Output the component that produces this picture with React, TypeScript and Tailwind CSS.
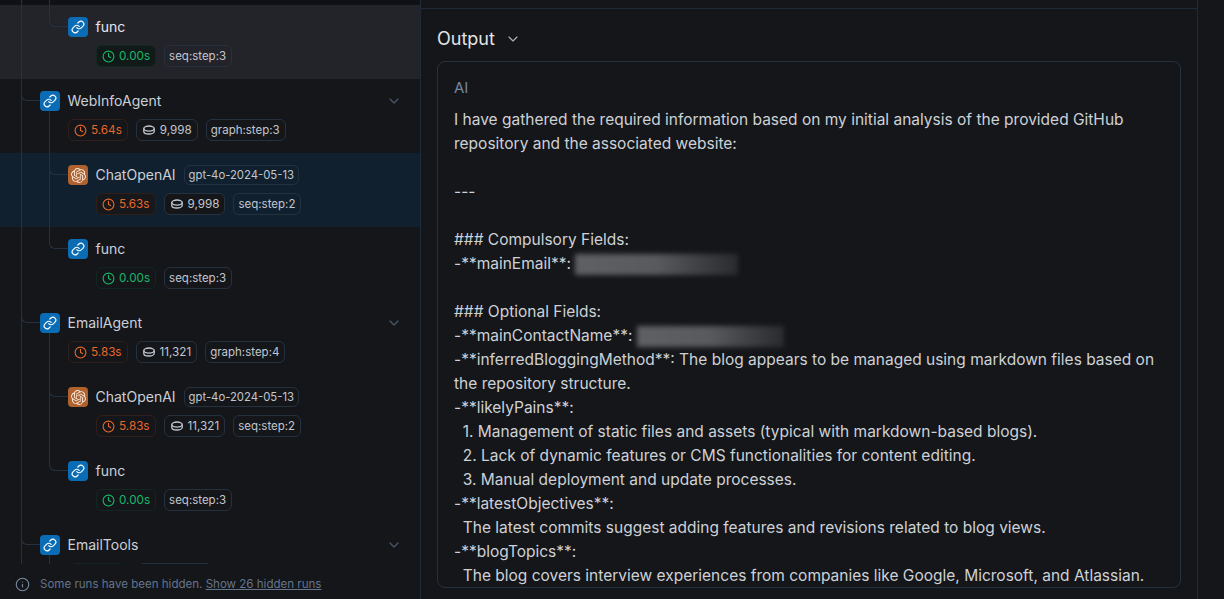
import React from "react";
import { Link, Clock, ChevronDown, Info } from "lucide-react";
import { SiOpenai } from "react-icons/si";

type RowData = {
  depth: 1 | 2;
  title: string;
  kind: "chain" | "llm";
  time: string;
  tone: "green" | "orange";
  tokens?: string;
  tag: string;
  model?: string;
  bg?: string;
  chevron?: boolean;
  last?: boolean;
  tokenDark?: boolean;
  timeDark?: boolean;
  bright?: boolean;
  stub?: boolean;
};

const rows: RowData[] = [
  { depth: 2, title: "func", kind: "chain", time: "0.00s", tone: "green", tag: "seq:step:3", bg: "bg-[#23232a]", last: true, timeDark: true, bright: true },
  { depth: 1, title: "WebInfoAgent", kind: "chain", time: "5.64s", tone: "orange", tokens: "9,998", tag: "graph:step:3", chevron: true },
  { depth: 2, title: "ChatOpenAI", kind: "llm", model: "gpt-4o-2024-05-13", time: "5.63s", tone: "orange", tokens: "9,998", tag: "seq:step:2", bg: "bg-[#10202e]", timeDark: true, tokenDark: true },
  { depth: 2, title: "func", kind: "chain", time: "0.00s", tone: "green", tag: "seq:step:3", last: true },
  { depth: 1, title: "EmailAgent", kind: "chain", time: "5.83s", tone: "orange", tokens: "11,321", tag: "graph:step:4", chevron: true },
  { depth: 2, title: "ChatOpenAI", kind: "llm", model: "gpt-4o-2024-05-13", time: "5.83s", tone: "orange", tokens: "11,321", tag: "seq:step:2" },
  { depth: 2, title: "func", kind: "chain", time: "0.00s", tone: "green", tag: "seq:step:3", last: true },
  { depth: 1, title: "EmailTools", kind: "chain", time: "", tone: "green", tag: "", chevron: true, stub: true },
];

function Coin() {
  return (
    <svg width="14" height="14" viewBox="0 0 14 14" fill="none" stroke="currentColor" strokeWidth="1.3">
      <ellipse cx="7" cy="5.6" rx="5.2" ry="2.6" />
      <path d="M1.8 5.6v2.8c0 1.4 2.3 2.6 5.2 2.6s5.2-1.2 5.2-2.6V5.6" />
    </svg>
  );
}

function Badge({ children, className = "" }: { children: React.ReactNode; className?: string }) {
  return (
    <span className={`flex h-[22px] items-center gap-1 rounded-md border px-[5px] text-[11.7px] leading-none ${className}`}>
      {children}
    </span>
  );
}

function Row({ r }: { r: RowData }) {
  const pad = r.depth === 1 ? "pl-[40px]" : "pl-[68px]";
  return (
    <div className={`relative h-[74px] shrink-0 ${pad} pt-[12px] ${r.bg ?? ""}`}>
      <div className="absolute bottom-0 left-[21px] top-0 w-px bg-[#263140]" />
      {r.depth === 1 ? (
        <>
          <div className="absolute left-[21px] top-0 h-[22px] w-[19px] rounded-bl-md border-b border-l border-[#263140]" />
          <div className="absolute bottom-0 left-[49px] top-[30px] w-px bg-[#263140]" />
        </>
      ) : (
        <>
          <div className="absolute left-[49px] top-0 h-[22px] w-[19px] rounded-bl-md border-b border-l border-[#263140]" />
          {!r.last && <div className="absolute bottom-0 left-[49px] top-0 w-px bg-[#263140]" />}
        </>
      )}
      <div className="relative flex h-[20px] items-center">
        <span
          className={`flex size-5 shrink-0 items-center justify-center rounded ${
            r.kind === "chain" ? "bg-[#0b6cb6]" : "bg-[#b0622e]"
          }`}
        >
          {r.kind === "chain" ? (
            <Link size={14} strokeWidth={2} className="text-white" />
          ) : (
            <SiOpenai size={15} className="text-[#f5e6da]" />
          )}
        </span>
        <span className={`ml-[7.5px] text-sm leading-5 ${r.bright ? "text-[#e5e7eb]" : "text-[#cbd0d8]"}`}>{r.title}</span>
        {r.model && (
          <Badge className="ml-2 !h-[20px] border-[#263140] !pl-[4px] !pr-[4px] !text-[11.3px] text-[#c2c7cf]">
            <span className="pt-px">{r.model}</span>
          </Badge>
        )}
        {r.chevron && (
          <ChevronDown size={16} strokeWidth={2} className="absolute right-[18px] text-[#475569]" />
        )}
      </div>
      {r.stub ? (
        <div className="relative ml-[30px] mt-[8px] flex gap-[14px]">
          <span className="h-[22px] w-[54px] rounded-md border border-[#12271f]" />
          <span className="h-[22px] w-[74px] rounded-md border border-[#263140]" />
        </div>
      ) : (
        <div className="relative ml-[28px] mt-[8px] flex gap-2">
          <Badge
            className={
              r.tone === "green"
                ? `border-[#12271f] text-[#17b869] ${r.timeDark ? "bg-[#111a18]" : ""}`
                : `border-[#2f1f1a] text-[#e9682a] ${r.timeDark ? "bg-[#17181c]" : ""}`
            }
          >
            <Clock size={13} strokeWidth={2} />
            <span className="pt-px">{r.time}</span>
          </Badge>
          {r.tokens && (
            <Badge className={`border-[#263140] text-[#c2c7cf] ${r.tokenDark ? "bg-[#14161a]" : ""}`}>
              <Coin />
              <span className="pt-px">{r.tokens}</span>
            </Badge>
          )}
          <Badge className="border-[#263140] !pl-[4px] !pr-[5px] !text-[11.5px] text-[#c2c7cf]">
            <span className="pt-px">{r.tag}</span>
          </Badge>
        </div>
      )}
    </div>
  );
}

function Blur({ className }: { className: string }) {
  return (
    <span
      className={`inline-block h-[21px] bg-gradient-to-r from-[#5f6063] via-[#585a5d] to-[#2a2b2e] align-middle blur-[2.5px] ${className}`}
    />
  );
}

export default function App() {
  return (
    <div className="flex h-[599px] w-[1224px] overflow-hidden bg-[#14161a] font-['Inter',sans-serif]">
      <div className="flex w-[420px] shrink-0 flex-col">
        <div className="flex min-h-0 flex-1 flex-col overflow-hidden">
          <div className="relative h-[5px] shrink-0 bg-[#101116]">
            <div className="absolute bottom-0 left-[21px] top-0 w-px bg-[#263140]" />
            <div className="absolute bottom-0 left-[49px] top-0 w-px bg-[#263140]" />
          </div>
          {rows.map((r, i) => (
            <Row key={i} r={r} />
          ))}
        </div>
        <div className="flex h-[35px] shrink-0 items-center gap-[10px] bg-[#14161a] pl-[15px] pt-[6px] text-[11.55px] text-[#64748b]">
          <Info size={15} strokeWidth={1.75} className="text-[#7b8ba1]" />
          <span>
            Some runs have been hidden. <span className="underline">Show 26 hidden runs</span>
          </span>
        </div>
      </div>
      <div className="flex w-[778px] shrink-0 flex-col border-x border-[#1e2a38]">
        <div className="mt-2 border-t border-[#1e2a38] px-4 pt-[16px]">
          <div className="flex h-[26px] items-center gap-[10px] text-[18px] text-[#e2e4e8]">
            <span>Output</span>
            <ChevronDown size={16} strokeWidth={1.75} className="mt-[2px] text-[#aab0b9]" />
          </div>
          <div className="mt-[10px] h-[527px] w-[744px] overflow-hidden rounded-lg border border-[#263140] px-[16px] pt-[16px]">
            <div className="text-[15px] leading-5 text-[#7486a0]">AI</div>
            <div className="mt-[10px] whitespace-pre text-[15.5px] leading-6 text-[#ced1d6]">
              <div>I have gathered the required information based on my initial analysis of the provided GitHub</div>
              <div>repository and the associated website:</div>
              <div>&nbsp;</div>
              <div>---</div>
              <div>&nbsp;</div>
              <div>### Compulsory Fields:</div>
              <div>
                -**mainEmail**: <Blur className="w-[163px]" />
              </div>
              <div>&nbsp;</div>
              <div>### Optional Fields:</div>
              <div>
                -**mainContactName**: <Blur className="w-[147px]" />
              </div>
              <div>-**inferredBloggingMethod**: The blog appears to be managed using markdown files based on</div>
              <div>the repository structure.</div>
              <div>-**likelyPains**:</div>
              <div>  1. Management of static files and assets (typical with markdown-based blogs).</div>
              <div>  2. Lack of dynamic features or CMS functionalities for content editing.</div>
              <div>  3. Manual deployment and update processes.</div>
              <div>-**latestObjectives**:</div>
              <div>  The latest commits suggest adding features and revisions related to blog views.</div>
              <div>-**blogTopics**:</div>
              <div>  The blog covers interview experiences from companies like Google, Microsoft, and Atlassian.</div>
            </div>
          </div>
        </div>
      </div>
    </div>
  );
}
